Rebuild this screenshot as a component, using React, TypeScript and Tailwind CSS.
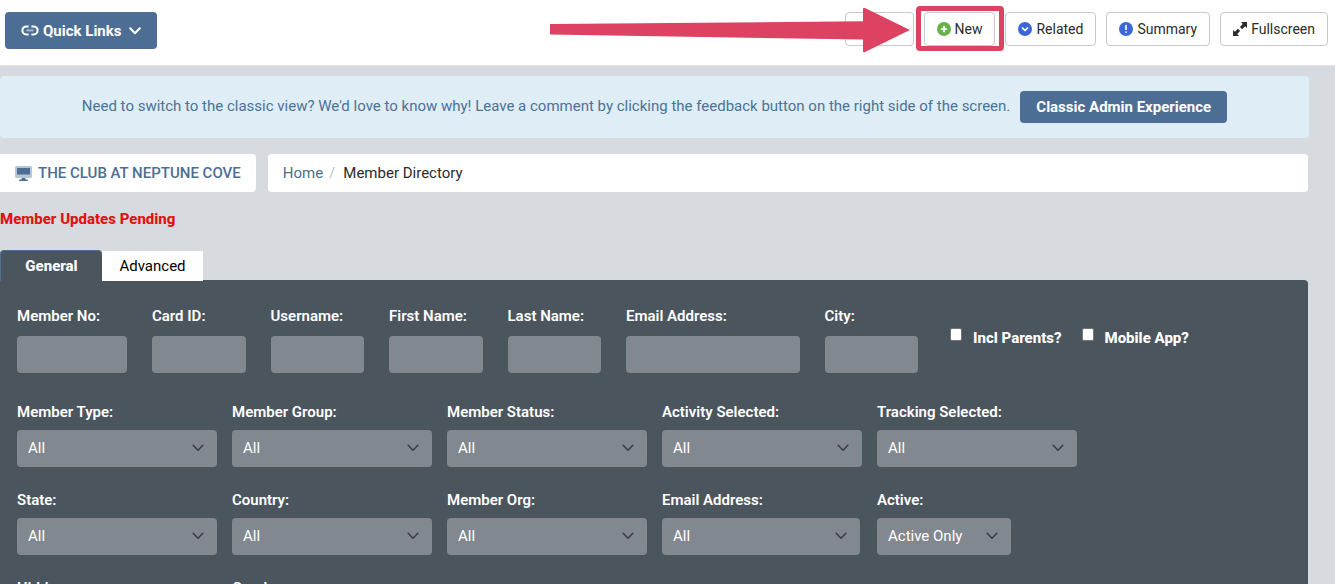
import type { ReactNode } from "react";

interface Option {
  label: string;
  value?: string;
  width?: string;
}

const textFields = ["Member No:", "Card ID:", "Username:", "First Name:", "Last Name:", "Email Address:", "City:"];

const selectRows: Option[][] = [
  [
    { label: "Member Type:" },
    { label: "Member Group:" },
    { label: "Member Status:" },
    { label: "Activity Selected:" },
    { label: "Tracking Selected:" },
  ],
  [
    { label: "State:" },
    { label: "Country:" },
    { label: "Member Org:" },
    { label: "Email Address:", width: "w-[198px]" },
    { label: "Active:", value: "Active Only", width: "w-[134px]" },
  ],
  [{ label: "Hidden:" }, { label: "Gender:" }],
];

function Chevron({ className }: { className: string }) {
  return (
    <svg viewBox="0 0 12 8" className={className} fill="none" stroke="currentColor" strokeLinecap="round" strokeLinejoin="round">
      <path d="M1.2 1.3 6 6.2l4.8-4.9" />
    </svg>
  );
}

function LinkIcon() {
  return (
    <svg viewBox="0 0 18 12" className="h-3 w-[18px]" fill="none" stroke="currentColor" strokeWidth="2">
      <path d="M7.6 1.4H5.400a4 4 0 0 0 0 8h2.200M10.400 1.400h2.200a4 4 0 0 1 0 8h-2.200" />
      <path d="M5.400 5.400h7.200" opacity="0.5" />
    </svg>
  );
}

function BadgeIcon({ className, children }: { className: string; children: ReactNode }) {
  return (
    <svg viewBox="0 0 14 14" className={`h-3.5 w-3.5 ${className}`}>
      <circle cx="7" cy="7" r="7" fill="currentColor" />
      <g fill="none" stroke="#fff" strokeWidth="1.7" strokeLinecap="round" strokeLinejoin="round">
        {children}
      </g>
    </svg>
  );
}

function ExpandIcon() {
  return (
    <svg viewBox="0 0 14 14" className="h-3.5 w-3.5" fill="currentColor">
      <path d="M8 0h5.400q.6 0 .6.600V6l-1.900-1.700-2.900 2.900-2.300-2.300 2.900-2.900zM6 14H.600Q0 14 0 13.400V8l1.900 1.700 2.900-2.900 2.300 2.300-2.900 2.900z" />
    </svg>
  );
}

function MonitorIcon() {
  return (
    <svg viewBox="0 0 17 15" className="h-[15px] w-[17px]" fill="#4c6e95">
      <path d="M1.500 0h14A1.500 1.500 0 0 1 17 1.500v9a1.500 1.500 0 0 1-1.500 1.500h-14A1.500 1.500 0 0 1 0 10.500v-9A1.500 1.500 0 0 1 1.500 0z" opacity="0.4" />
      <path d="M2 2h13v6.500H2zM6.800 12h3.400l.5 1.500h1.500a.7.700 0 0 1 0 1.500H4.800a.7.700 0 0 1 0-1.500h1.500z" />
    </svg>
  );
}

function ToolButton({ icon, children }: { icon: ReactNode; children: ReactNode }) {
  return (
    <button className="flex h-[34px] items-center gap-1 rounded border border-[#c9c9c9] bg-white px-3 text-sm text-[#2b2b2b]">
      {icon}
      {children}
    </button>
  );
}

function Callout() {
  return (
    <div className="pointer-events-none">
      <svg viewBox="0 0 360 46" className="absolute -left-[374px] -top-[5px] h-[46px] w-[360px]" fill="#dd4263">
        <path d="M0 17 313 14.300V2q0-2 2-1l45 22-45 22q-2 1-2-1V32.500L0 27.500z" />
      </svg>
      <div className="absolute -bottom-[5px] -left-2 -right-[9px] -top-1.5 rounded border-5 border-[#dd4263]" />
    </div>
  );
}

function SelectField({ label, value = "All", width = "w-[200px]" }: Option) {
  return (
    <div className="w-[200px]">
      <label className="flex flex-col">
        <span className="h-7 font-semibold">{label}</span>
        <span className={`relative block ${width}`}>
          <select className="h-[37px] w-full appearance-none rounded bg-[#82888f] pb-0.5 pl-[11px] pr-8 text-white">
            <option>{value}</option>
          </select>
          <Chevron className="pointer-events-none absolute right-[13px] top-[14px] h-2 w-3 stroke-[1.6] text-[#3a3f46]" />
        </span>
      </label>
    </div>
  );
}

export default function App() {
  return (
    <div className="h-screen overflow-hidden bg-[#d7dadf] font-['Roboto','Liberation_Sans',sans-serif] text-[15px] leading-5">
      <header className="flex h-[66px] items-start justify-between border-b border-[#e1e3e6] bg-white pl-[5px] pr-[7px] pt-3">
        <button className="flex h-[37px] items-center gap-1 rounded bg-[#4c6e95] px-4 font-bold text-white">
          <LinkIcon />
          Quick Links
          <Chevron className="ml-1 h-2 w-3 stroke-2" />
        </button>
        <div className="flex gap-2.5">
          <button aria-label="Menu" className="h-[34px] w-[69px] rounded border border-[#c9c9c9] bg-white" />
          <div className="relative">
            <ToolButton icon={<BadgeIcon className="text-[#6ab04c]"><path d="M7 4.600v4.800M4.600 7h4.800" /></BadgeIcon>}>New</ToolButton>
            <Callout />
          </div>
          <ToolButton icon={<BadgeIcon className="text-[#3b67d9]"><path d="m4.500 6 2.500 2.500L9.500 6" /></BadgeIcon>}>Related</ToolButton>
          <ToolButton icon={<BadgeIcon className="text-[#3b67d9]"><path d="M7 3.700v3.500M7 10v.1" /></BadgeIcon>}>Summary</ToolButton>
          <ToolButton icon={<ExpandIcon />}>Fullscreen</ToolButton>
        </div>
      </header>

      <main className="pr-[27px] pt-2.5">
        <div className="-mr-px flex h-[62px] items-center justify-center gap-2.5 rounded bg-[#dfedf6] text-[#4a7396]">
          <p className="pb-0.5">Need to switch to the classic view? We'd love to know why! Leave a comment by clicking the feedback button on the right side of the screen.</p>
          <button className="h-8 rounded-sm bg-[#4c6e95] px-4 font-bold text-white">Classic Admin Experience</button>
        </div>

        <div className="mt-4 flex gap-3">
          <a href="#" className="flex h-[38px] items-center gap-1.5 rounded-r-sm bg-white px-[15px] font-medium text-[#4c6e95]">
            <MonitorIcon />
            THE CLUB AT NEPTUNE COVE
          </a>
          <nav className="flex flex-1 items-center rounded-sm bg-white px-[15px] text-[#2b2b2b]">
            <a href="#" className="text-[#4c6e95]">Home</a>
            <span className="pl-1.5 pr-2 text-[#bfc2c6]">/</span>
            <span>Member Directory</span>
          </nav>
        </div>

        <p className="mt-[17px] font-extrabold text-[#e01212]">Member Updates Pending</p>

        <div className="relative -mb-px mt-[21px] flex h-[31px]" role="tablist">
          <button role="tab" aria-selected="true" className="w-[102px] rounded-t border-l border-t border-[#4c6e95] bg-[#4b555e] font-extrabold text-white">
            General
          </button>
          <button role="tab" aria-selected="false" className="mt-px w-[101px] bg-white text-black">
            Advanced
          </button>
        </div>

        <form className="rounded-tr bg-[#4b555e] pb-6 pl-[17px] pt-[26px] text-white">
          <div className="flex">
            <div className="grid w-[901px] grid-cols-[220fr_187fr_187fr_187fr_187fr_347fr_187fr] gap-[25px]">
              {textFields.map((label) => (
                <label key={label} className="flex flex-col">
                  <span className="h-[30px] whitespace-nowrap font-semibold">{label}</span>
                  <input type="text" className="h-[37px] w-full rounded bg-[#82888f] px-2.5" />
                </label>
              ))}
            </div>
            <div className="ml-8 mt-[22px] flex gap-5 font-extrabold">
              {["Incl Parents?", "Mobile App?"].map((label) => (
                <label key={label} className="flex items-start gap-[11px]">
                  <input type="checkbox" className="h-[13px] w-3 appearance-none rounded-xs border border-[#767676] bg-white" />
                  {label}
                </label>
              ))}
            </div>
          </div>

          <div className="mt-[29px] flex flex-col gap-[23px]">
            {selectRows.map((row, i) => (
              <div key={i} className="flex gap-[15px]">
                {row.map((field) => (
                  <SelectField key={field.label} {...field} />
                ))}
              </div>
            ))}
          </div>
        </form>
      </main>
    </div>
  );
}
